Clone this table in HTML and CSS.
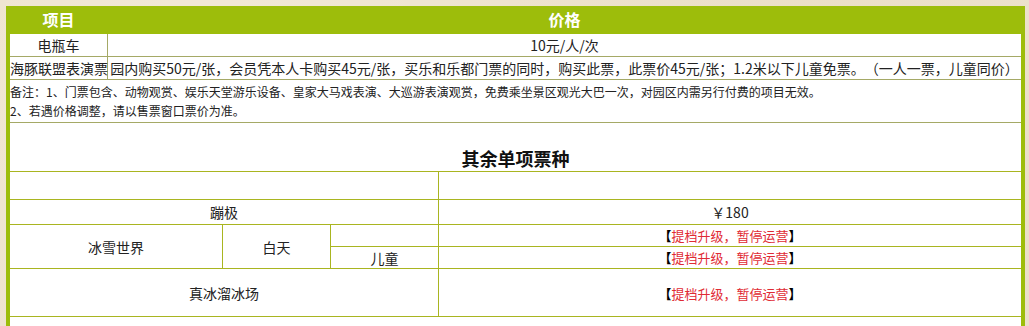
FILE: index.html
```html
<!DOCTYPE html>
<html lang="zh-CN">
<head>
<meta charset="utf-8">
<title>价格</title>
<link rel="stylesheet" href="styles.css">
</head>
<body>
<div class="wrap">
  <table class="price">
    <colgroup><col class="col-name"><col></colgroup>
    <tr class="head"><th>项目</th><th>价格</th></tr>
    <tr class="row"><td>电瓶车</td><td>10元/人/次</td></tr>
    <tr class="row"><td>海豚联盟表演票</td><td>园内购买50元/张，会员凭本人卡购买45元/张，买乐和乐都门票的同时，购买此票，此票价45元/张；1.2米以下儿童免票。（一人一票，儿童同价）</td></tr>
    <tr class="notes"><td colspan="2">备注：1、门票包含、动物观赏、娱乐天堂游乐设备、皇家大马戏表演、大巡游表演观赏，免费乘坐景区观光大巴一次，对园区内需另行付费的项目无效。<br>2、若遇价格调整，请以售票窗口票价为准。</td></tr>
  </table>
  <div class="sub-title">其余单项票种</div>
  <table class="items">
    <colgroup><col class="c-a"><col class="c-b"><col class="c-c"><col></colgroup>
    <tr class="r-blank"><td colspan="3"></td><td></td></tr>
    <tr class="r-std"><td colspan="3">蹦极</td><td>￥180</td></tr>
    <tr class="r-sub"><td rowspan="2">冰雪世界</td><td rowspan="2">白天</td><td></td><td><span class="br">【</span><span class="red">提档升级，暂停运营</span><span class="br">】</span></td></tr>
    <tr class="r-sub"><td>儿童</td><td><span class="br">【</span><span class="red">提档升级，暂停运营</span><span class="br">】</span></td></tr>
    <tr class="r-tall"><td colspan="3">真冰溜冰场</td><td><span class="br">【</span><span class="red">提档升级，暂停运营</span><span class="br">】</span></td></tr>
  </table>
</div>
</body>
</html>
```

FILE: styles.css
```css
html, body {
  margin: 0;
  padding: 0;
}
body {
  background: #eee3cd;
  background-image: radial-gradient(circle at 20% 30%, rgba(255,255,255,0.25), transparent 40%),
                    radial-gradient(circle at 80% 70%, rgba(210,195,165,0.25), transparent 45%);
  font-family: "Noto Sans CJK SC", "Noto Sans", sans-serif;
  color: #222;
  text-spacing-trim: space-all;
}
.wrap {
  margin: 6px 4px 0 6px;
  border-left: 4px solid #9dbd0b;
  border-right: 4px solid #9dbd0b;
  background: #fff;
  height: 320px;
  overflow: hidden;
}
table {
  border-collapse: collapse;
  table-layout: fixed;
  margin: 0 -1px;
  width: calc(100% + 2px);
}
.price .col-name { width: 98px; }
.price th, .price td {
  padding: 0;
  text-align: center;
  white-space: nowrap;
  font-size: 14px;
  font-weight: normal;
}
.price .head th {
  background: #9dbd0b;
  color: #fff;
  font-weight: bold;
  font-size: 16px;
  height: 27px;
  line-height: 27px;
  border: 1px solid #9dbd0b;
  border-top: 0;
}
.price .row td {
  border: 1px solid #a5a966;
  height: 22px;
  line-height: 22px;
}
.price .notes td {
  border: 1px solid #a5a966;
  text-align: left;
  font-size: 12px;
  line-height: 19px;
  height: 42px;
  padding: 0;
}
.sub-title {
  height: 48px;
  box-sizing: border-box;
  padding-top: 22px;
  line-height: 26px;
  text-align: center;
  font-size: 18px;
  font-weight: bold;
  color: #111;
}
.items .c-a { width: 213px; }
.items .c-b { width: 108px; }
.items .c-c { width: 108px; }
.items td {
  border: 1px solid #a9b520;
  padding: 0;
  text-align: center;
  font-size: 14px;
  white-space: nowrap;
}
.items .r-blank td { height: 27px; }
.items .r-std td { height: 24px; line-height: 22px; }
.items .r-sub td { height: 21px; line-height: 20px; font-size: 14px; }
.items .r-tall td { height: 47px; }
.items .red {
  color: #df2b34;
  font-size: 13px;
}
.items .br {
  color: #000;
  font-weight: bold;
  font-size: 13px;
}
```
